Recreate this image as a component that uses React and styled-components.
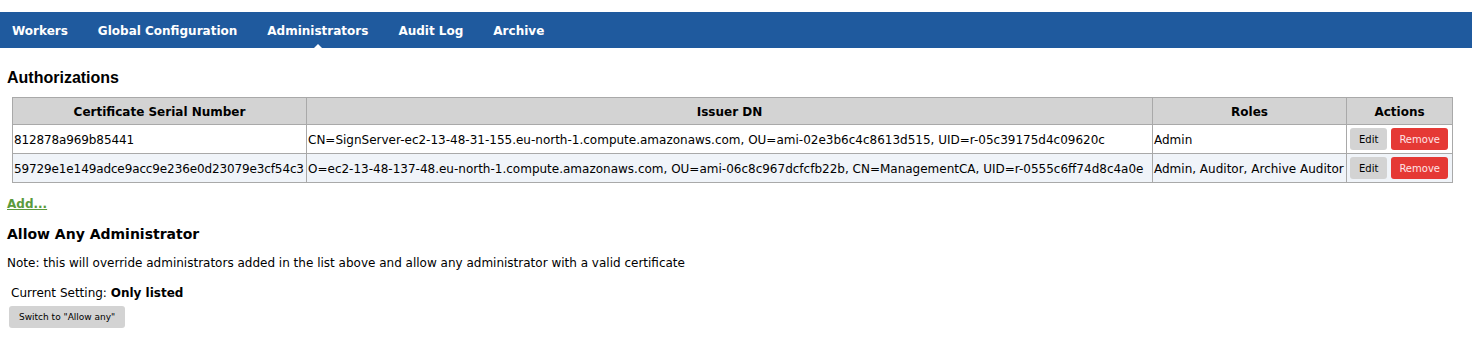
import React from "react";
import styled, { createGlobalStyle } from "styled-components";

const Global = createGlobalStyle`
  html, body { margin: 0; padding: 0; background: #fff; }
  body { font-family: "DejaVu Sans", Verdana, sans-serif; color: #000; }
`;

const Nav = styled.nav`
  margin-top: 12px;
  height: 36px;
  background: #1f5a9e;
  display: flex;
  align-items: center;
  gap: 30px;
  padding-left: 12px;
`;

const NavItem = styled.a`
  position: relative;
  color: #fff;
  font: bold 12px "DejaVu Sans", Verdana, sans-serif;
  text-decoration: none;
  line-height: 36px;
  padding-top: 2px;
  ${(p) =>
    p.$active &&
    `
    &::after {
      content: "";
      position: absolute;
      left: 50%;
      bottom: 0;
      margin-left: -5px;
      border-left: 5px solid transparent;
      border-right: 5px solid transparent;
      border-bottom: 5px solid #fff;
    }
  `}
`;

const Page = styled.main`
  padding: 0 7px;
`;

const Heading = styled.h2`
  margin: 21px 0 10px;
  font: bold 16px/18px "Liberation Sans", Arial, sans-serif;
`;

const Table = styled.table`
  margin-left: 5px;
  width: 1440px;
  border-collapse: collapse;
  table-layout: fixed;
  font: 12px "DejaVu Sans", Verdana, sans-serif;
`;

const Th = styled.th`
  background: #d3d3d3;
  border: 1px solid #a9a9a9;
  height: 25px;
  padding: 1px 1px 0;
  font-weight: bold;
  text-align: center;
`;

const Tr = styled.tr`
  background: ${(p) => (p.$alt ? "#f0f4f9" : "#fff")};
`;

const Td = styled.td`
  border: 1px solid #a9a9a9;
  height: 27px;
  padding: 1px 1px 0;
  white-space: nowrap;
  overflow: hidden;
  letter-spacing: ${(p) => (p.$tight ? "-0.12px" : "normal")};
`;

const ActionsTd = styled(Td)`
  padding: 0 3px 0 3px;
  height: 28px;
`;

const Actions = styled.div`
  display: flex;
  gap: 4px;
  align-items: center;
`;

const Button = styled.button`
  border: none;
  border-radius: 3px;
  height: 22px;
  padding: 0 ${(p) => (p.$wide ? 8 : 9)}px;
  font: 10px "DejaVu Sans", Verdana, sans-serif;
  background: ${(p) => (p.$danger ? "#e53935" : "#d3d3d3")};
  color: ${(p) => (p.$danger ? "#ffe4e6" : "#000")};
  cursor: pointer;
`;

const AddLink = styled.a`
  display: block;
  margin-top: 14px;
  color: #5a9a3c;
  font: bold 12px/15px "DejaVu Sans", Verdana, sans-serif;
  text-decoration: underline;
  width: max-content;
`;

const SubHeading = styled.h3`
  margin: 13px 0 0;
  font: bold 14px/18px "DejaVu Sans", Verdana, sans-serif;
`;

const Note = styled.p`
  margin: 13px 0 0;
  font: 12px/15px "DejaVu Sans", Verdana, sans-serif;
`;

const Setting = styled.div`
  margin-top: 15px;
  padding-left: 4px;
  font: 12px/15px "DejaVu Sans", Verdana, sans-serif;
`;

const SwitchButton = styled(Button)`
  display: block;
  margin: 5px 0 0 2px;
  padding: 0 10px;
  font-size: 9px;
`;

const rows = [
  {
    serial: "812878a969b85441",
    dn: "CN=SignServer-ec2-13-48-31-155.eu-north-1.compute.amazonaws.com, OU=ami-02e3b6c4c8613d515, UID=r-05c39175d4c09620c",
    roles: "Admin",
  },
  {
    serial: "59729e1e149adce9acc9e236e0d23079e3cf54c3",
    dn: "O=ec2-13-48-137-48.eu-north-1.compute.amazonaws.com, OU=ami-06c8c967dcfcfb22b, CN=ManagementCA, UID=r-0555c6ff74d8c4a0e",
    roles: "Admin, Auditor, Archive Auditor",
  },
];

export default function App() {
  return (
    <>
      <Global />
      <Nav>
        <NavItem>Workers</NavItem>
        <NavItem>Global Configuration</NavItem>
        <NavItem $active>Administrators</NavItem>
        <NavItem>Audit Log</NavItem>
        <NavItem>Archive</NavItem>
      </Nav>
      <Page>
        <Heading>Authorizations</Heading>
        <Table>
          <colgroup>
            <col style={{ width: 294 }} />
            <col style={{ width: 846 }} />
            <col style={{ width: 194 }} />
            <col style={{ width: 106 }} />
          </colgroup>
          <thead>
            <tr>
              <Th>Certificate Serial Number</Th>
              <Th>Issuer DN</Th>
              <Th>Roles</Th>
              <Th>Actions</Th>
            </tr>
          </thead>
          <tbody>
            {rows.map((r, i) => (
              <Tr key={r.serial} $alt={i % 2 === 1}>
                <Td $tight>{r.serial}</Td>
                <Td>{r.dn}</Td>
                <Td>{r.roles}</Td>
                <ActionsTd>
                  <Actions>
                    <Button>Edit</Button>
                    <Button $danger $wide>Remove</Button>
                  </Actions>
                </ActionsTd>
              </Tr>
            ))}
          </tbody>
        </Table>
        <AddLink href="#">Add...</AddLink>
        <SubHeading>Allow Any Administrator</SubHeading>
        <Note>
          Note: this will override administrators added in the list above and allow any administrator with a valid certificate
        </Note>
        <Setting>
          Current Setting: <b>Only listed</b>
        </Setting>
        <SwitchButton>Switch to "Allow any"</SwitchButton>
      </Page>
    </>
  );
}
